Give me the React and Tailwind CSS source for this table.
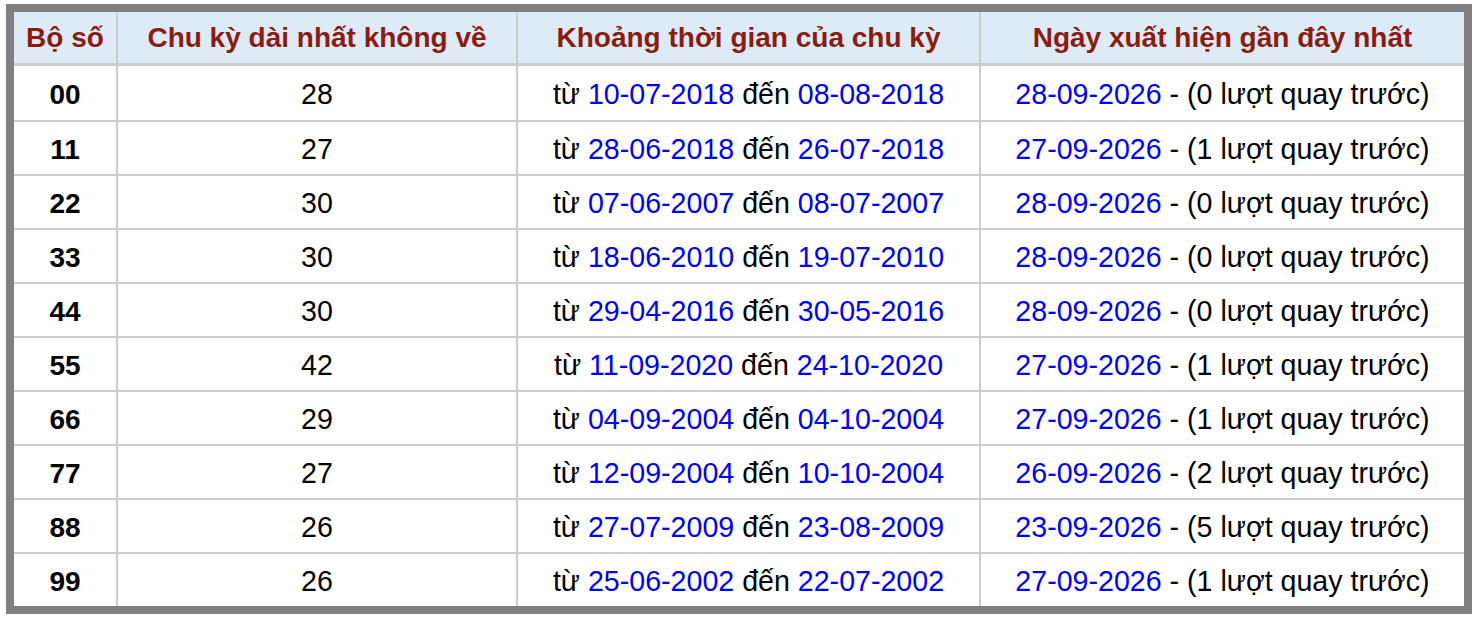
import React from "react";

const rows = [
  { bo: "00", ky: 28, from: "10-07-2018", to: "08-08-2018", last: "28-09-2026", luot: 0 },
  { bo: "11", ky: 27, from: "28-06-2018", to: "26-07-2018", last: "27-09-2026", luot: 1 },
  { bo: "22", ky: 30, from: "07-06-2007", to: "08-07-2007", last: "28-09-2026", luot: 0 },
  { bo: "33", ky: 30, from: "18-06-2010", to: "19-07-2010", last: "28-09-2026", luot: 0 },
  { bo: "44", ky: 30, from: "29-04-2016", to: "30-05-2016", last: "28-09-2026", luot: 0 },
  { bo: "55", ky: 42, from: "11-09-2020", to: "24-10-2020", last: "27-09-2026", luot: 1 },
  { bo: "66", ky: 29, from: "04-09-2004", to: "04-10-2004", last: "27-09-2026", luot: 1 },
  { bo: "77", ky: 27, from: "12-09-2004", to: "10-10-2004", last: "26-09-2026", luot: 2 },
  { bo: "88", ky: 26, from: "27-07-2009", to: "23-08-2009", last: "23-09-2026", luot: 5 },
  { bo: "99", ky: 26, from: "25-06-2002", to: "22-07-2002", last: "27-09-2026", luot: 1 },
];

export default function App() {
  return (
    <div
      className="bg-white w-[1484px] h-[628px] pt-[4px] pl-[6px]"
      style={{ fontFamily: '"Liberation Sans", Arial, Helvetica, sans-serif' }}
    >
      <div className="w-[1466px] border-8 border-[#808080]">
        <table className="w-full table-fixed border-separate border-spacing-0 text-[28px] text-black">
          <thead>
            <tr className="bg-[#dcebf5] text-[#8e1b12]">
              <th className="w-[102px] h-[54px] p-0 font-bold text-center align-middle border-b-[3px] border-[#cccccc]">
                Bộ số
              </th>
              <th className="w-[400px] h-[54px] p-0 font-bold text-center align-middle border-l-2 border-b-[3px] border-[#cccccc]">
                Chu kỳ dài nhất không về
              </th>
              <th className="w-[463px] h-[54px] p-0 font-bold text-center align-middle border-l-2 border-b-[3px] border-[#cccccc]">
                Khoảng thời gian của chu kỳ
              </th>
              <th className="w-[485px] h-[54px] p-0 font-bold text-center align-middle border-l-2 border-b-[3px] border-[#cccccc]">
                Ngày xuất hiện gần đây nhất
              </th>
            </tr>
          </thead>
          <tbody className="text-[28.6px]">
            {rows.map((r, i) => (
              <tr key={r.bo}>
                <td
                  className={
                    i === 0
                      ? "h-[54px] p-0 pt-[3px] text-center align-middle font-bold text-[28px]"
                      : "h-[54px] p-0 pt-[3px] text-center align-middle font-bold text-[28px] border-t-2 border-[#cccccc]"
                  }
                >
                  {r.bo}
                </td>
                <td
                  className={
                    i === 0
                      ? "h-[54px] p-0 pt-[3px] text-center align-middle border-l-2 border-[#cccccc]"
                      : "h-[54px] p-0 pt-[3px] text-center align-middle border-l-2 border-t-2 border-[#cccccc]"
                  }
                >
                  {r.ky}
                </td>
                <td
                  className={
                    i === 0
                      ? "h-[54px] p-0 pt-[3px] text-center align-middle border-l-2 border-[#cccccc]"
                      : "h-[54px] p-0 pt-[3px] text-center align-middle border-l-2 border-t-2 border-[#cccccc]"
                  }
                >
                  từ <span className="text-[#0000ff]">{r.from}</span> đến{" "}
                  <span className="text-[#0000ff]">{r.to}</span>
                </td>
                <td
                  className={
                    i === 0
                      ? "h-[54px] p-0 pt-[3px] text-center align-middle border-l-2 border-[#cccccc]"
                      : "h-[54px] p-0 pt-[3px] text-center align-middle border-l-2 border-t-2 border-[#cccccc]"
                  }
                >
                  <span className="text-[#0000ff]">{r.last}</span> - ({r.luot} lượt quay trước)
                </td>
              </tr>
            ))}
          </tbody>
        </table>
      </div>
    </div>
  );
}
